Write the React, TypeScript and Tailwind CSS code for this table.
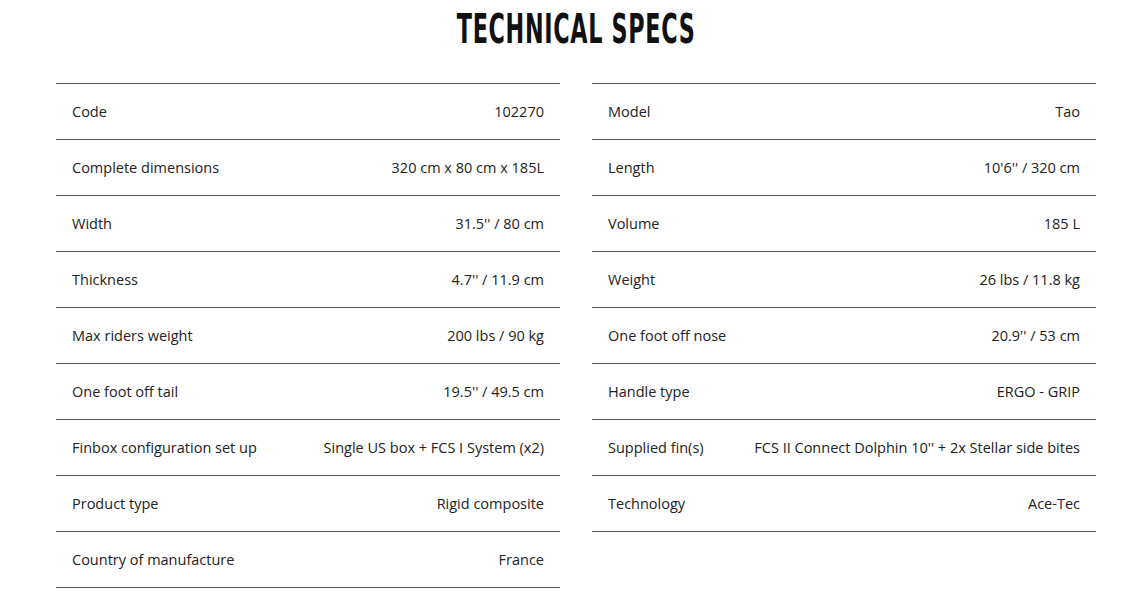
import React from "react";

const left = [
  ["Code", "102270"],
  ["Complete dimensions", "320 cm x 80 cm x 185L"],
  ["Width", "31.5'' / 80 cm"],
  ["Thickness", "4.7'' / 11.9 cm"],
  ["Max riders weight", "200 lbs / 90 kg"],
  ["One foot off tail", "19.5'' / 49.5 cm"],
  ["Finbox configuration set up", "Single US box + FCS I System (x2)"],
  ["Product type", "Rigid composite"],
  ["Country of manufacture", "France"],
];

const right = [
  ["Model", "Tao"],
  ["Length", "10'6'' / 320 cm"],
  ["Volume", "185 L"],
  ["Weight", "26 lbs / 11.8 kg"],
  ["One foot off nose", "20.9'' / 53 cm"],
  ["Handle type", "ERGO - GRIP"],
  ["Supplied fin(s)", "FCS II Connect Dolphin 10'' + 2x Stellar side bites"],
  ["Technology", "Ace-Tec"],
];

function SpecList({ rows }: { rows: string[][] }) {
  return (
    <div className="w-[504px] border-t border-[#555]">
      {rows.map(([label, value]) => (
        <div
          key={label}
          className="h-[56px] flex items-center justify-between px-4 pt-[1px] border-b border-[#555] text-[14.5px] text-[#222]"
        >
          <span>{label}</span>
          <span>{value}</span>
        </div>
      ))}
    </div>
  );
}

export default function App() {
  return (
    <div className="min-h-screen bg-white font-['Open_Sans',sans-serif]">
      <div className="ml-[56px] w-[1040px]">
        <div className="h-[83px] pt-[11px] flex justify-center">
          <h1 className="text-[37px] leading-[40px] font-bold tracking-[1px] text-[#111] font-['DejaVu_Sans_Condensed',sans-serif] [transform:scale(0.67,1.1)] whitespace-nowrap">
            TECHNICAL SPECS
          </h1>
        </div>
        <div className="flex gap-8 items-start">
          <SpecList rows={left} />
          <SpecList rows={right} />
        </div>
      </div>
    </div>
  );
}
